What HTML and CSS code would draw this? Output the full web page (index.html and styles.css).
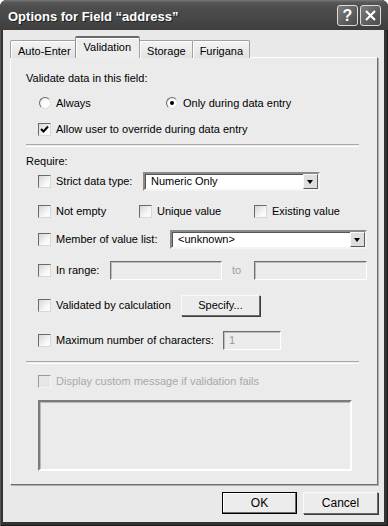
FILE: index.html
```html
<!DOCTYPE html>
<html lang="en">
<head>
<meta charset="UTF-8">
<title>Options for Field "address"</title>
<link rel="stylesheet" href="styles.css">
</head>
<body>

<div class="window">
	<div class="titlebar">
		<span class="title">Options for Field “address”</span>
		<span class="capbtn help">?</span>
		<span class="capbtn close"><svg width="13" height="13" viewBox="0 0 13 13"><path d="M2 2 L11 11 M11 2 L2 11" stroke="#fff" stroke-width="2.2" fill="none"/></svg></span>
	</div>

	<div class="client">
		<div class="tabs">
			<span class="tab">Auto-Enter</span>
			<span class="tab active">Validation</span>
			<span class="tab">Storage</span>
			<span class="tab">Furigana</span>
		</div>

		<div class="panel">
			<div class="row r-head">Validate data in this field:</div>

			<div class="row r-radios ind">
				<span class="opt w-always"><span class="radio"></span>Always</span>
				<span class="opt"><span class="radio on"></span>Only during data entry</span>
			</div>

			<div class="row r-allow ind">
				<span class="check"><svg width="11" height="11" viewBox="0 0 11 11"><path d="M2 5 L4.5 7.5 L9 2.5" stroke="#000" stroke-width="2" fill="none"/></svg></span>Allow user to override during data entry
			</div>

			<div class="sep s1"></div>

			<div class="row r-req">Require:</div>

			<div class="row r-strict tall ind">
				<span class="check"></span><span class="lbl w-strict">Strict data type:</span>
				<span class="combo w-combo1">Numeric Only<span class="arrow"></span></span>
			</div>

			<div class="row r-empty ind">
				<span class="opt w-empty"><span class="check"></span>Not empty</span>
				<span class="opt w-unique"><span class="check"></span>Unique value</span>
				<span class="opt"><span class="check"></span>Existing value</span>
			</div>

			<div class="row r-member tall ind">
				<span class="check"></span><span class="lbl w-member">Member of value list:</span>
				<span class="combo w-combo2">&lt;unknown&gt;<span class="arrow"></span></span>
			</div>

			<div class="row r-range tall ind">
				<span class="check"></span><span class="lbl w-range">In range:</span>
				<span class="field w-from"></span>
				<span class="to">to</span>
				<span class="field w-upto"></span>
			</div>

			<div class="row r-calc btnrow ind">
				<span class="check"></span><span class="lbl w-calc">Validated by calculation</span>
				<span class="btn w-specify">Specify...</span>
			</div>

			<div class="row r-max tall ind">
				<span class="check"></span><span class="lbl w-max">Maximum number of characters:</span>
				<span class="field w-max-field">1</span>
			</div>

			<div class="sep s2"></div>

			<div class="row r-msg ind disabled">
				<span class="check"></span>Display custom message if validation fails
			</div>

			<div class="message"></div>
		</div>

		<div class="footer">
			<span class="btn wide default">OK</span>
			<span class="btn wide">Cancel</span>
		</div>
	</div>
</div>

</body>
</html>
```

FILE: styles.css
```css
body { margin:0; background:#fff; font-family:"Liberation Sans", Arial, sans-serif; font-size:11px; color:#000; }

.window { width:388px; height:526px; background:#333; display:flex; flex-direction:column; border-radius:7px 7px 0 0; overflow:hidden; box-shadow:inset 1px 0 0 #555, inset -1px 0 0 #1a1a1a, inset 0 -1px 0 #1a1a1a; }

/* title bar */
.titlebar { height:30px; flex:none; display:flex; align-items:center; padding:0 7px 0 8px; background:linear-gradient(#7a7a7a 0, #5a5a5a 2px, #4e4e4e 6px, #474747 60%, #3e3e3e 100%); }
.title { flex:1; color:#fff; font-weight:bold; font-size:13px; text-shadow:1px 1px 0 #222; padding-top:2px; }
.capbtn { width:19px; height:19px; margin-left:2px; border:1px solid #ddd; border-radius:3px; background:linear-gradient(135deg, #7c7c7c, #4a4a4a); color:#fff; display:flex; align-items:center; justify-content:center; font-weight:bold; font-size:16px; margin-top:1px; }

/* client area */
.client { flex:1; margin:0 4px 4px 3px; background:#e9e9e9; padding:7px 6px 0 7px; display:flex; flex-direction:column; }

.tabs { display:flex; height:21px; align-items:flex-end; position:relative; z-index:1; margin-bottom:-1px; }
.tab { height:18px; padding:2px 6px 0 7px; box-sizing:border-box; display:flex; align-items:center; border:1px solid #a0a0a0; border-bottom:none; border-radius:2px 2px 0 0; background:linear-gradient(#f4f4f4, #e2e2e2); box-shadow:inset 1px 1px 0 #fff; margin-right:-1px; }
.tab.active { height:22px; background:#ededed; margin:0 -1px 0 -2px; padding:0 8px 3px 8px; border-color:#909090; border-top:2px solid #6a6a6a; }

.panel { box-sizing:border-box; height:428px; border:1px solid; border-color:#fff #6f6f6f #6f6f6f #fff; box-shadow:1px 1px 0 #b0b0b0; background:#ebebeb; padding:12px 17px 0 15px; }

.row { display:flex; align-items:center; height:16px; white-space:nowrap; }
.row.tall { height:20px; }
.row.btnrow { height:22px; }
.ind { padding-left:12px; }

.r-radios { margin-top:9px; }
.r-allow { margin-top:10px; }
.sep { height:1px; border-top:1px solid #a8a8a8; border-bottom:1px solid #fff; margin-right:1px; }
.s1 { margin-top:7px; }
.r-req { margin-top:6px; }
.r-strict { margin-top:2px; }
.r-empty { margin-top:12px; }
.r-member { margin-top:10px; }
.r-range { margin-top:11px; }
.r-calc { margin-top:14px; }
.r-max { margin-top:14px; }
.s2 { margin-top:11px; }
.r-msg { margin-top:9px; }

.opt { display:flex; align-items:center; }
.w-always { width:127px; }
.w-empty { width:101px; }
.w-unique { width:115px; }

.check { width:11px; height:11px; flex:none; border:1px solid; border-color:#6a6a6a #d8d8d8 #d8d8d8 #6a6a6a; background:linear-gradient(135deg, #d6d6d6, #fafafa 70%); margin-right:5px; display:flex; align-items:center; justify-content:center; }
.radio { width:10px; height:10px; flex:none; border:1px solid; border-color:#6a6a6a #e0e0e0 #e0e0e0 #6a6a6a; border-radius:50%; background:radial-gradient(circle at 60% 60%, #fff 40%, #dcdcdc); margin:0 5px 0 1px; display:flex; align-items:center; justify-content:center; }
.radio.on::after { content:""; width:4px; height:4px; border-radius:50%; background:#000; }

.lbl { flex:none; }
.w-strict { width:87px; }
.w-member { width:114px; }
.w-range { width:54px; }
.w-calc { width:125px; }
.w-max { width:167px; }

.combo { flex:none; box-sizing:border-box; border:2px solid; border-color:#8a8a8a #f4f4f4 #f4f4f4 #8a8a8a; box-shadow:inset 1px 1px 0 #555; background:#fff; display:flex; align-items:center; padding-left:6px; position:relative; height:19px; }
.w-combo1 { width:177px; }
.w-combo2 { width:197px; }
.arrow { position:absolute; right:0; top:0; width:15px; height:15px; box-sizing:border-box; border:1px solid; border-color:#fafafa #5a5a5a #5a5a5a #fafafa; background:#dedede; }
.arrow::after { content:""; position:absolute; left:3px; top:5px; border:3.5px solid transparent; border-top:4px solid #000; border-bottom:none; }

.field { height:19px; flex:none; box-sizing:border-box; border:1px solid; border-color:#6e6e6e #fff #fff #6e6e6e; box-shadow:inset 1px 1px 0 #bcbcbc; background:#ececec; color:#9a9a9a; padding-left:5px; display:flex; align-items:center; }
.w-from { width:112px; }
.w-upto { width:113px; }
.to { width:32px; flex:none; padding-left:10px; box-sizing:border-box; color:#a0a0a0; }
.w-max-field { width:58px; }

.btn { box-sizing:border-box; height:22px; border:1px solid; border-color:#fafafa #6a6a6a #6a6a6a #fafafa; box-shadow:1px 1px 0 #3c3c3c; background:#ececec; display:flex; align-items:center; justify-content:center; flex:none; }
.w-specify { width:79px; height:21px; }

.disabled { color:#a8a8a8; }
.disabled .check { background:#e6e6e6; border-color:#9a9a9a #f4f4f4 #f4f4f4 #9a9a9a; }

.message { margin:11px 8px 0 12px; height:67px; border:2px solid; border-color:#7a7a7a #fff #fff #7a7a7a; box-shadow:inset 1px 1px 0 #b8b8b8; background:#ebebeb; }

.footer { display:flex; justify-content:flex-end; gap:6px; margin-top:7px; }
.btn.wide { width:75px; height:22px; font-size:12px; }
.btn.default { border:1px solid #000; box-shadow:inset -1px -1px 0 #6a6a6a, inset 1px 1px 0 #fff; }
```
